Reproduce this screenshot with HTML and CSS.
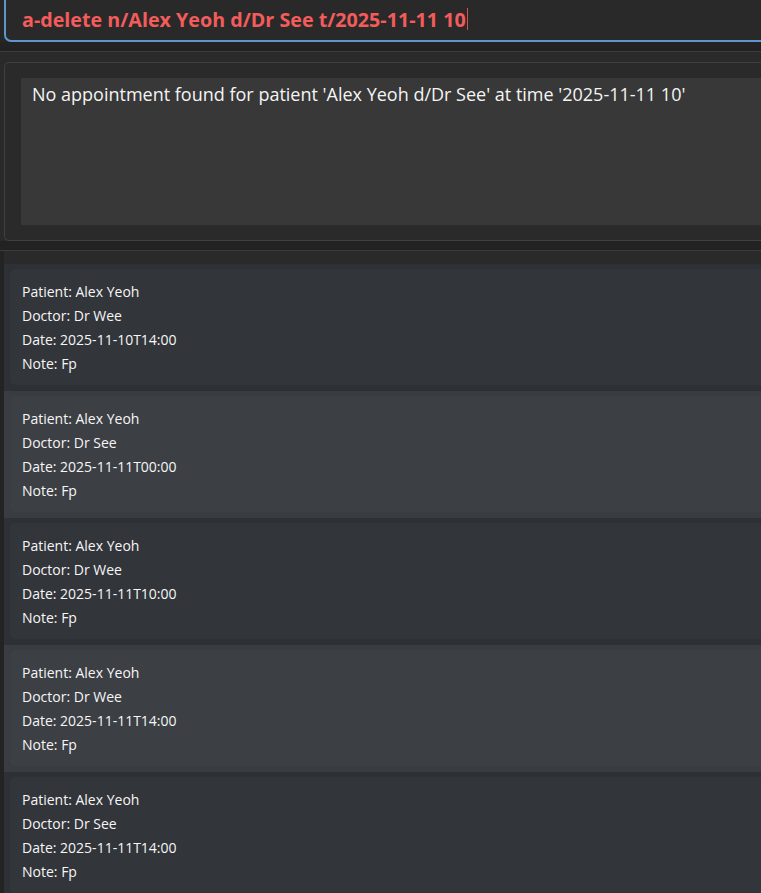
FILE: index.html
```html
<!DOCTYPE html>
<html>
<head>
<meta charset="utf-8">
<link rel="stylesheet" href="styles.css">
</head>
<body>
<div class="cmd-area">
  <div class="cmd-box"><span class="cmd-text">a-delete n/Alex Yeoh d/Dr See t/2025-11-11 10</span><span class="caret"></span></div>
</div>
<div class="split"></div>
<div class="result-area">
  <div class="result-box">
    <div class="result-text">No appointment found for patient 'Alex Yeoh d/Dr See' at time '2025-11-11 10'</div>
  </div>
</div>
<div class="split"></div>
<div class="list-area">
  <div class="cell odd"><div class="card"><div>Patient: Alex Yeoh</div><div>Doctor: Dr Wee</div><div>Date: 2025-11-10T14:00</div><div>Note: Fp</div></div></div>
  <div class="cell even"><div class="card"><div>Patient: Alex Yeoh</div><div>Doctor: Dr See</div><div>Date: 2025-11-11T00:00</div><div>Note: Fp</div></div></div>
  <div class="cell odd"><div class="card"><div>Patient: Alex Yeoh</div><div>Doctor: Dr Wee</div><div>Date: 2025-11-11T10:00</div><div>Note: Fp</div></div></div>
  <div class="cell even"><div class="card"><div>Patient: Alex Yeoh</div><div>Doctor: Dr Wee</div><div>Date: 2025-11-11T14:00</div><div>Note: Fp</div></div></div>
  <div class="cell odd"><div class="card"><div>Patient: Alex Yeoh</div><div>Doctor: Dr See</div><div>Date: 2025-11-11T14:00</div><div>Note: Fp</div></div></div>
</div>
</body>
</html>
```
FILE: styles.css
```css
html, body {
  margin: 0;
  padding: 0;
  background: #252525;
  overflow: hidden;
  font-family: "Open Sans", "Noto Sans", sans-serif;
}
.cmd-area {
  padding-left: 4px;
  background: #262626;
}
.cmd-box {
  height: 40px;
  background: #292929;
  border-left: 2px solid #5f95cc;
  border-bottom: 2px solid #5f95cc;
  border-bottom-left-radius: 7px;
  display: flex;
  align-items: center;
  padding-left: 16px;
}
.cmd-text {
  color: #f45c5c;
  font-weight: 700;
  font-size: 19.7px;
  white-space: nowrap;
  margin-top: -2px;
}
.caret {
  width: 1px;
  height: 22px;
  background: #d55050;
  margin-left: 1px;
  margin-top: -2px;
}
.split {
  height: 9px;
  background: #222222;
  border-bottom: 1px solid #3b3b3b;
}
.result-area {
  background: #2a2a2a;
  padding: 10px 0 0 4px;
}
.result-box {
  border: 1px solid #404040;
  border-right: none;
  border-radius: 5px 0 0 5px;
  padding: 15px 0 15px 16px;
  background: #2a2a2a;
}
.result-text {
  height: 147px;
  box-sizing: border-box;
  background: #383838;
  color: #f4f4f4;
  font-size: 18px;
  padding: 4px 0 0 11px;
  white-space: nowrap;
}
.list-area {
  background: #2a2a2a;
  padding-top: 13px;
  border-left: 4px solid #232323;
}
.cell {
  height: 127px;
  box-sizing: border-box;
  padding: 5px 0 6px 6px;
}
.cell.odd { background: #2d3034; }
.cell.even { background: #393c41; }
.card {
  height: 100%;
  box-sizing: border-box;
  border-radius: 5px 0 0 5px;
  padding: 11px 0 0 12px;
  color: #f6f6f6;
  font-size: 14px;
  line-height: 24px;
}
.odd .card { background: #32353a; }
.even .card { background: #3c3f44; }
```
